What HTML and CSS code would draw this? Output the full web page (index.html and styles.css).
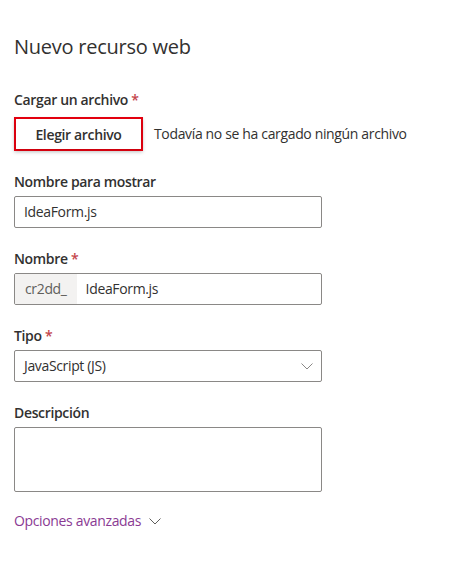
FILE: index.html
```html
<!DOCTYPE html>
<html lang="es">
<head>
<meta charset="utf-8">
<title>Nuevo recurso web</title>
<link rel="stylesheet" href="styles.css">
</head>
<body>
<div class="panel">
  <h1 class="title">Nuevo recurso web</h1>

  <div class="field upload">
    <div class="label">Cargar un archivo <span class="req">*</span></div>
    <div class="upload-row">
      <div class="highlight"><button class="btn" type="button">Elegir archivo</button></div>
      <span class="upload-status">Todavía no se ha cargado ningún archivo</span>
    </div>
  </div>

  <div class="field">
    <div class="label">Nombre para mostrar</div>
    <div class="input"><span class="value">IdeaForm.js</span></div>
  </div>

  <div class="field">
    <div class="label">Nombre <span class="req">*</span></div>
    <div class="input prefixed"><span class="prefix">cr2dd_</span><span class="value">IdeaForm.js</span></div>
  </div>

  <div class="field">
    <div class="label">Tipo <span class="req">*</span></div>
    <div class="input select"><span class="value">JavaScript (JS)</span>
      <svg class="chev" width="12" height="7" viewBox="0 0 12 7"><path d="M0.5 0.5 L6 6 L11.5 0.5" fill="none" stroke="#8a8886" stroke-width="1"/></svg>
    </div>
  </div>

  <div class="field">
    <div class="label">Descripción</div>
    <div class="input textarea"></div>
  </div>

  <div class="advanced">Opciones avanzadas
    <svg class="chev-sm" width="12" height="7" viewBox="0 0 12 7"><path d="M0.5 0.5 L6 6 L11.5 0.5" fill="none" stroke="#605e5c" stroke-width="1"/></svg>
  </div>
</div>
</body>
</html>
```

FILE: styles.css
```css
html, body {
  margin: 0;
  padding: 0;
  background: #ffffff;
}
body {
  font-family: "Open Sans", "Noto Sans", sans-serif;
  font-size: 14px;
  letter-spacing: -0.35px;
  color: #323130;
}
.panel {
  padding: 33px 14px 0 14px;
  width: 308px;
}
.title {
  margin: 0;
  font-size: 20px;
  line-height: 28px;
  font-weight: 400;
  letter-spacing: -0.25px;
  color: #323130;
}
.field {
  margin-top: 21px;
}
.field.upload {
  margin-top: 29px;
}
.label {
  font-weight: 600;
  line-height: 20px;
  height: 20px;
  margin-bottom: 4px;
}
.upload .label {
  margin-bottom: 7px;
}
.req {
  color: #c4454b;
}
.upload-row {
  display: flex;
  align-items: center;
  width: 460px;
}
.highlight {
  border: 2px solid #e3000f;
  width: 125px;
  height: 30px;
  box-shadow: 0 1.6px 3.6px rgba(0,0,0,0.18), 0 0.3px 0.9px rgba(0,0,0,0.14);
  display: flex;
}
.btn {
  flex: 1;
  border: none;
  background: #ffffff;
  font-family: inherit;
  font-size: 14px;
  font-weight: 600;
  letter-spacing: -0.35px;
  color: #323130;
  padding: 0;
  box-shadow: 0 1.6px 3.6px rgba(0,0,0,0.13);
}
.upload-status {
  margin-left: 11px;
  line-height: 20px;
}
.input {
  box-sizing: border-box;
  height: 32px;
  border: 1px solid #8a8886;
  border-radius: 2px;
  display: flex;
  align-items: center;
  padding: 0 9px;
  line-height: 20px;
}
.prefixed {
  padding: 0;
  overflow: hidden;
}
.prefix {
  background: #f3f2f1;
  color: #605e5c;
  height: 100%;
  display: flex;
  align-items: center;
  padding: 0 10px;
}
.prefixed .value {
  padding-left: 9px;
}
.select {
  justify-content: space-between;
  padding-right: 8px;
}
.chev {
  display: block;
}
.textarea {
  height: 65px;
}
.advanced {
  margin-top: 19px;
  line-height: 20px;
  color: #8a3a93;
  display: flex;
  align-items: center;
}
.chev-sm {
  margin-left: 8px;
  display: block;
}
```
